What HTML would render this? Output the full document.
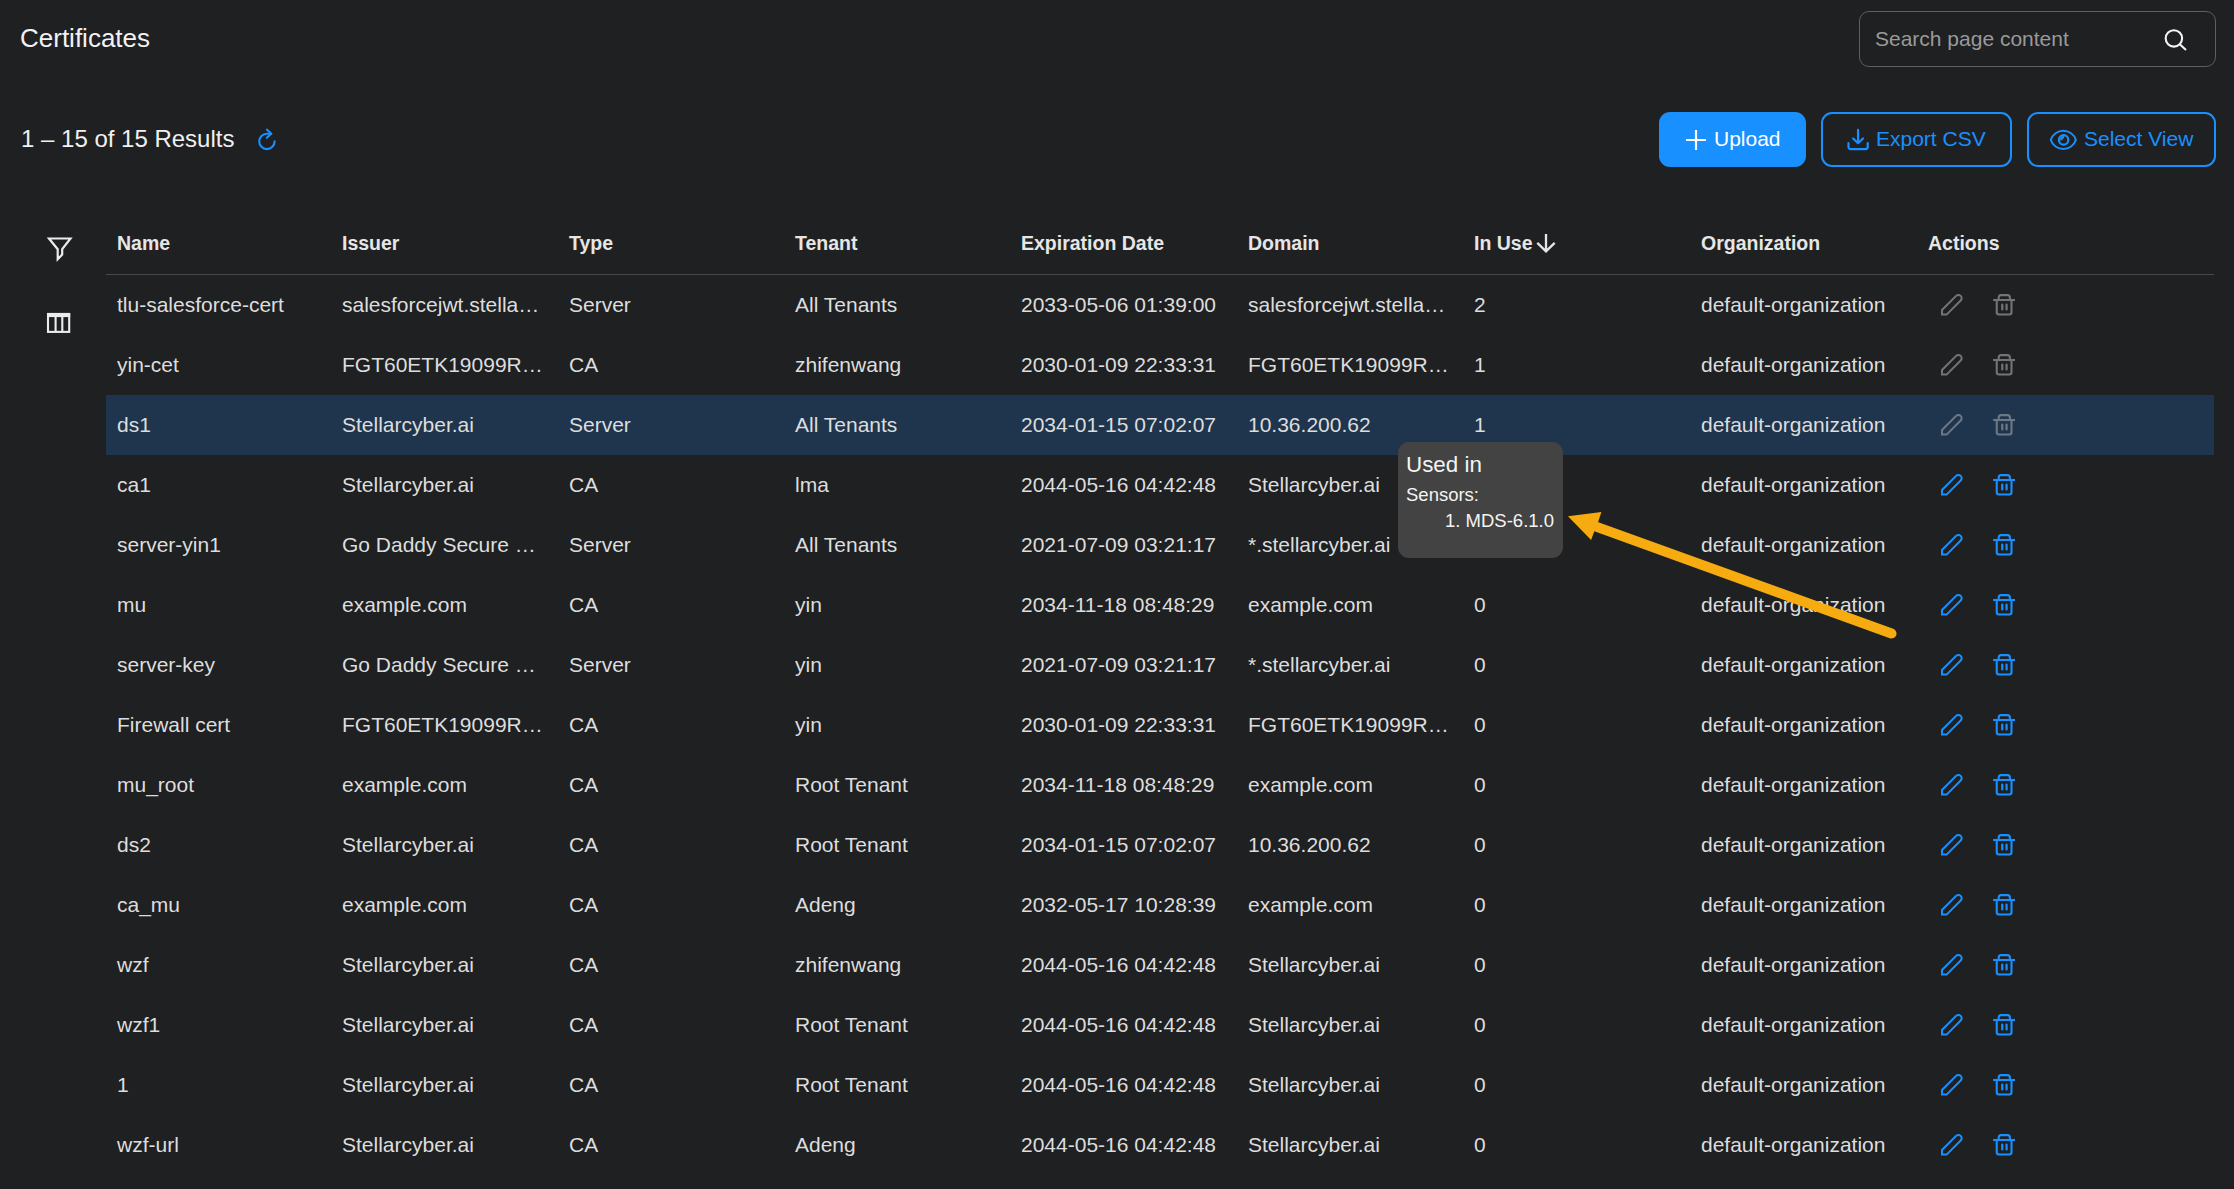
<!DOCTYPE html>
<html><head><meta charset="utf-8"><title>Certificates</title>
<style>
html,body{margin:0;padding:0;}
body{width:2234px;height:1189px;overflow:hidden;background:#1f2022;font-family:"Liberation Sans",sans-serif;position:relative;color:#dddddd;}
.a{position:absolute;white-space:nowrap;}
.title{left:20px;top:20px;font-size:26px;line-height:36px;color:#f2f2f2;}
.search{left:1859px;top:11px;width:355px;height:54px;border:1px solid #5f5f5f;border-radius:10px;}
.ph{left:1875px;top:24px;font-size:21px;line-height:30px;color:#9a9a9a;}
.results{left:21px;top:123px;font-size:24px;line-height:32px;color:#f0f0f0;}
.btn{top:112px;height:55px;border-radius:11px;box-sizing:border-box;}
.b1{left:1659px;width:147px;background:#1890ff;}
.b2{left:1821px;width:191px;border:2px solid #1890ff;}
.b3{left:2027px;width:189px;border:2px solid #1890ff;}
.bt{font-size:21px;line-height:30px;top:124px;}
.hd{font-size:19.5px;font-weight:bold;line-height:30px;top:228px;color:#e6e6e6;}
.cell{font-size:21px;line-height:60px;}
.row{left:106px;width:2108px;height:60px;}
</style></head><body>

<div class="a title">Certificates</div>
<div class="a search"></div>
<div class="a ph">Search page content</div>
<svg class="a" style="left:2163px;top:28px" width="26" height="26" viewBox="0 0 26 26" fill="none" stroke="#f4f4f4" stroke-width="2.1"><circle cx="10.9" cy="10.4" r="8.2"/><path d="M16.8 16.3 L23 22"/></svg>
<div class="a results">1 – 15 of 15 Results</div>
<svg class="a" style="left:250px;top:122px" width="34" height="34" viewBox="0 0 34 34" fill="none" stroke="#1890ff" stroke-width="2.1" stroke-linecap="round" stroke-linejoin="round"><path d="M24.6 19.4 A7.7 7.7 0 1 1 16.9 11.7 L21.2 11.7"/><path d="M16.9 7.6 L21.3 11.7 L16.9 15.8"/></svg>
<div class="a btn b1"></div><div class="a btn b2"></div><div class="a btn b3"></div>
<svg class="a" style="left:1685px;top:129px" width="22" height="22" viewBox="0 0 22 22" stroke="#fff" stroke-width="2.2"><path d="M11 1 V21 M1 11 H21"/></svg>
<div class="a bt" style="left:1714px;color:#fff">Upload</div>
<svg class="a" style="left:1846px;top:128px" width="24" height="24" viewBox="0 0 24 24" fill="none" stroke="#1890ff" stroke-width="2.2" stroke-linecap="round" stroke-linejoin="round"><path d="M12.07 1.9 V14.6 M7.1 10.5 L12.07 15.2 L17 10.5"/><path d="M2.5 15.1 V19 a2.2 2.2 0 0 0 2.2 2.2 H19.5 a2.2 2.2 0 0 0 2.2 -2.2 V15.1"/></svg>
<div class="a bt" style="left:1876px;color:#1890ff">Export CSV</div>
<svg class="a" style="left:2045px;top:124px" width="38" height="32" viewBox="0 0 38 32" fill="none" stroke="#1890ff" stroke-width="1.9" stroke-linejoin="round"><path d="M5.8 15.9 A13.2 13.2 0 0 1 30.9 15.9 A13.2 13.2 0 0 1 5.8 15.9 Z"/><circle cx="18.6" cy="15.9" r="4.7" stroke-width="2.2"/><path d="M15 16.2 A4 4 0 0 1 19.2 12 L19.2 14.3 A1.9 1.9 0 0 0 17.3 16.2 Z" fill="#1890ff" stroke="none"/></svg>
<div class="a bt" style="left:2084px;color:#1890ff">Select View</div>
<svg class="a" style="left:46px;top:236px" width="28" height="27" viewBox="0 0 28 27" fill="none" stroke="#ececec" stroke-width="2.2" stroke-linejoin="miter" stroke-miterlimit="10"><path d="M3 2.5 H24.5 L16.2 13.2 V18.6 L11.7 23.2 V13.2 Z"/></svg>
<svg class="a" style="left:46px;top:312px" width="26" height="23" viewBox="0 0 26 23" fill="none" stroke="#ececec"><rect x="2" y="2.5" width="21.2" height="17.4" stroke-width="2.1"/><path d="M1 3 H24.2" stroke-width="4.2"/><path d="M9.6 4 V19.5 M16.3 4 V19.5" stroke-width="2.1"/></svg>
<div class="a hd" style="left:117px">Name</div>
<div class="a hd" style="left:342px">Issuer</div>
<div class="a hd" style="left:569px">Type</div>
<div class="a hd" style="left:795px">Tenant</div>
<div class="a hd" style="left:1021px">Expiration Date</div>
<div class="a hd" style="left:1248px">Domain</div>
<div class="a hd" style="left:1474px">In Use</div>
<div class="a hd" style="left:1701px">Organization</div>
<div class="a hd" style="left:1928px">Actions</div>
<svg class="a" style="left:1534px;top:232px" width="23" height="23" viewBox="0 0 23 23" fill="none" stroke="#e6e6e6" stroke-width="2.3"><path d="M12 2 V19 M3.3 10.9 L12 19.4 L20.7 10.9"/></svg>
<div class="a" style="left:106px;top:274px;width:2108px;height:1px;background:#47484a"></div>
<div class="a cell" style="left:117px;top:275px">tlu-salesforce-cert</div>
<div class="a cell" style="left:342px;top:275px">salesforcejwt.stella…</div>
<div class="a cell" style="left:569px;top:275px">Server</div>
<div class="a cell" style="left:795px;top:275px">All Tenants</div>
<div class="a cell" style="left:1021px;top:275px">2033-05-06 01:39:00</div>
<div class="a cell" style="left:1248px;top:275px">salesforcejwt.stella…</div>
<div class="a cell" style="left:1474px;top:275px">2</div>
<div class="a cell" style="left:1701px;top:275px">default-organization</div>
<div class="a" style="left:1939px;top:292px"><svg width="25" height="25" viewBox="0 0 25 25" fill="none" stroke="#747474" stroke-width="2" stroke-linejoin="miter"><path d="M3 22.6 L3 18 L17.1 3.9 A3.25 3.25 0 0 1 21.7 8.5 L7.6 22.6 Z"/></svg></div>
<div class="a" style="left:1992px;top:292px"><svg width="25" height="25" viewBox="0 0 25 25" fill="none" stroke="#747474" stroke-width="2.1"><path d="M1.1 8 H23"/><path d="M4.75 8 V20.3 a2.2 2.2 0 0 0 2.2 2.2 H17.3 a2.2 2.2 0 0 0 2.2 -2.2 V8"/><path d="M6.7 7.5 V5.6 a2.5 2.5 0 0 1 2.5 -2.5 H15.4 a2.5 2.5 0 0 1 2.5 2.5 V7.5"/><path d="M10.26 12.7 V17.5 M14.57 12.7 V17.5" stroke-width="2.2" stroke-linecap="round"/></svg></div>
<div class="a cell" style="left:117px;top:335px">yin-cet</div>
<div class="a cell" style="left:342px;top:335px">FGT60ETK19099R…</div>
<div class="a cell" style="left:569px;top:335px">CA</div>
<div class="a cell" style="left:795px;top:335px">zhifenwang</div>
<div class="a cell" style="left:1021px;top:335px">2030-01-09 22:33:31</div>
<div class="a cell" style="left:1248px;top:335px">FGT60ETK19099R…</div>
<div class="a cell" style="left:1474px;top:335px">1</div>
<div class="a cell" style="left:1701px;top:335px">default-organization</div>
<div class="a" style="left:1939px;top:352px"><svg width="25" height="25" viewBox="0 0 25 25" fill="none" stroke="#747474" stroke-width="2" stroke-linejoin="miter"><path d="M3 22.6 L3 18 L17.1 3.9 A3.25 3.25 0 0 1 21.7 8.5 L7.6 22.6 Z"/></svg></div>
<div class="a" style="left:1992px;top:352px"><svg width="25" height="25" viewBox="0 0 25 25" fill="none" stroke="#747474" stroke-width="2.1"><path d="M1.1 8 H23"/><path d="M4.75 8 V20.3 a2.2 2.2 0 0 0 2.2 2.2 H17.3 a2.2 2.2 0 0 0 2.2 -2.2 V8"/><path d="M6.7 7.5 V5.6 a2.5 2.5 0 0 1 2.5 -2.5 H15.4 a2.5 2.5 0 0 1 2.5 2.5 V7.5"/><path d="M10.26 12.7 V17.5 M14.57 12.7 V17.5" stroke-width="2.2" stroke-linecap="round"/></svg></div>
<div class="a row" style="top:395px;background:#1f354e"></div>
<div class="a cell" style="left:117px;top:395px">ds1</div>
<div class="a cell" style="left:342px;top:395px">Stellarcyber.ai</div>
<div class="a cell" style="left:569px;top:395px">Server</div>
<div class="a cell" style="left:795px;top:395px">All Tenants</div>
<div class="a cell" style="left:1021px;top:395px">2034-01-15 07:02:07</div>
<div class="a cell" style="left:1248px;top:395px">10.36.200.62</div>
<div class="a cell" style="left:1474px;top:395px">1</div>
<div class="a cell" style="left:1701px;top:395px">default-organization</div>
<div class="a" style="left:1939px;top:412px"><svg width="25" height="25" viewBox="0 0 25 25" fill="none" stroke="#6e7885" stroke-width="2" stroke-linejoin="miter"><path d="M3 22.6 L3 18 L17.1 3.9 A3.25 3.25 0 0 1 21.7 8.5 L7.6 22.6 Z"/></svg></div>
<div class="a" style="left:1992px;top:412px"><svg width="25" height="25" viewBox="0 0 25 25" fill="none" stroke="#6e7885" stroke-width="2.1"><path d="M1.1 8 H23"/><path d="M4.75 8 V20.3 a2.2 2.2 0 0 0 2.2 2.2 H17.3 a2.2 2.2 0 0 0 2.2 -2.2 V8"/><path d="M6.7 7.5 V5.6 a2.5 2.5 0 0 1 2.5 -2.5 H15.4 a2.5 2.5 0 0 1 2.5 2.5 V7.5"/><path d="M10.26 12.7 V17.5 M14.57 12.7 V17.5" stroke-width="2.2" stroke-linecap="round"/></svg></div>
<div class="a cell" style="left:117px;top:455px">ca1</div>
<div class="a cell" style="left:342px;top:455px">Stellarcyber.ai</div>
<div class="a cell" style="left:569px;top:455px">CA</div>
<div class="a cell" style="left:795px;top:455px">lma</div>
<div class="a cell" style="left:1021px;top:455px">2044-05-16 04:42:48</div>
<div class="a cell" style="left:1248px;top:455px">Stellarcyber.ai</div>
<div class="a cell" style="left:1474px;top:455px">0</div>
<div class="a cell" style="left:1701px;top:455px">default-organization</div>
<div class="a" style="left:1939px;top:472px"><svg width="25" height="25" viewBox="0 0 25 25" fill="none" stroke="#1890ff" stroke-width="2" stroke-linejoin="miter"><path d="M3 22.6 L3 18 L17.1 3.9 A3.25 3.25 0 0 1 21.7 8.5 L7.6 22.6 Z"/></svg></div>
<div class="a" style="left:1992px;top:472px"><svg width="25" height="25" viewBox="0 0 25 25" fill="none" stroke="#1890ff" stroke-width="2.1"><path d="M1.1 8 H23"/><path d="M4.75 8 V20.3 a2.2 2.2 0 0 0 2.2 2.2 H17.3 a2.2 2.2 0 0 0 2.2 -2.2 V8"/><path d="M6.7 7.5 V5.6 a2.5 2.5 0 0 1 2.5 -2.5 H15.4 a2.5 2.5 0 0 1 2.5 2.5 V7.5"/><path d="M10.26 12.7 V17.5 M14.57 12.7 V17.5" stroke-width="2.2" stroke-linecap="round"/></svg></div>
<div class="a cell" style="left:117px;top:515px">server-yin1</div>
<div class="a cell" style="left:342px;top:515px">Go Daddy Secure …</div>
<div class="a cell" style="left:569px;top:515px">Server</div>
<div class="a cell" style="left:795px;top:515px">All Tenants</div>
<div class="a cell" style="left:1021px;top:515px">2021-07-09 03:21:17</div>
<div class="a cell" style="left:1248px;top:515px">*.stellarcyber.ai</div>
<div class="a cell" style="left:1474px;top:515px">0</div>
<div class="a cell" style="left:1701px;top:515px">default-organization</div>
<div class="a" style="left:1939px;top:532px"><svg width="25" height="25" viewBox="0 0 25 25" fill="none" stroke="#1890ff" stroke-width="2" stroke-linejoin="miter"><path d="M3 22.6 L3 18 L17.1 3.9 A3.25 3.25 0 0 1 21.7 8.5 L7.6 22.6 Z"/></svg></div>
<div class="a" style="left:1992px;top:532px"><svg width="25" height="25" viewBox="0 0 25 25" fill="none" stroke="#1890ff" stroke-width="2.1"><path d="M1.1 8 H23"/><path d="M4.75 8 V20.3 a2.2 2.2 0 0 0 2.2 2.2 H17.3 a2.2 2.2 0 0 0 2.2 -2.2 V8"/><path d="M6.7 7.5 V5.6 a2.5 2.5 0 0 1 2.5 -2.5 H15.4 a2.5 2.5 0 0 1 2.5 2.5 V7.5"/><path d="M10.26 12.7 V17.5 M14.57 12.7 V17.5" stroke-width="2.2" stroke-linecap="round"/></svg></div>
<div class="a cell" style="left:117px;top:575px">mu</div>
<div class="a cell" style="left:342px;top:575px">example.com</div>
<div class="a cell" style="left:569px;top:575px">CA</div>
<div class="a cell" style="left:795px;top:575px">yin</div>
<div class="a cell" style="left:1021px;top:575px">2034-11-18 08:48:29</div>
<div class="a cell" style="left:1248px;top:575px">example.com</div>
<div class="a cell" style="left:1474px;top:575px">0</div>
<div class="a cell" style="left:1701px;top:575px">default-organization</div>
<div class="a" style="left:1939px;top:592px"><svg width="25" height="25" viewBox="0 0 25 25" fill="none" stroke="#1890ff" stroke-width="2" stroke-linejoin="miter"><path d="M3 22.6 L3 18 L17.1 3.9 A3.25 3.25 0 0 1 21.7 8.5 L7.6 22.6 Z"/></svg></div>
<div class="a" style="left:1992px;top:592px"><svg width="25" height="25" viewBox="0 0 25 25" fill="none" stroke="#1890ff" stroke-width="2.1"><path d="M1.1 8 H23"/><path d="M4.75 8 V20.3 a2.2 2.2 0 0 0 2.2 2.2 H17.3 a2.2 2.2 0 0 0 2.2 -2.2 V8"/><path d="M6.7 7.5 V5.6 a2.5 2.5 0 0 1 2.5 -2.5 H15.4 a2.5 2.5 0 0 1 2.5 2.5 V7.5"/><path d="M10.26 12.7 V17.5 M14.57 12.7 V17.5" stroke-width="2.2" stroke-linecap="round"/></svg></div>
<div class="a cell" style="left:117px;top:635px">server-key</div>
<div class="a cell" style="left:342px;top:635px">Go Daddy Secure …</div>
<div class="a cell" style="left:569px;top:635px">Server</div>
<div class="a cell" style="left:795px;top:635px">yin</div>
<div class="a cell" style="left:1021px;top:635px">2021-07-09 03:21:17</div>
<div class="a cell" style="left:1248px;top:635px">*.stellarcyber.ai</div>
<div class="a cell" style="left:1474px;top:635px">0</div>
<div class="a cell" style="left:1701px;top:635px">default-organization</div>
<div class="a" style="left:1939px;top:652px"><svg width="25" height="25" viewBox="0 0 25 25" fill="none" stroke="#1890ff" stroke-width="2" stroke-linejoin="miter"><path d="M3 22.6 L3 18 L17.1 3.9 A3.25 3.25 0 0 1 21.7 8.5 L7.6 22.6 Z"/></svg></div>
<div class="a" style="left:1992px;top:652px"><svg width="25" height="25" viewBox="0 0 25 25" fill="none" stroke="#1890ff" stroke-width="2.1"><path d="M1.1 8 H23"/><path d="M4.75 8 V20.3 a2.2 2.2 0 0 0 2.2 2.2 H17.3 a2.2 2.2 0 0 0 2.2 -2.2 V8"/><path d="M6.7 7.5 V5.6 a2.5 2.5 0 0 1 2.5 -2.5 H15.4 a2.5 2.5 0 0 1 2.5 2.5 V7.5"/><path d="M10.26 12.7 V17.5 M14.57 12.7 V17.5" stroke-width="2.2" stroke-linecap="round"/></svg></div>
<div class="a cell" style="left:117px;top:695px">Firewall cert</div>
<div class="a cell" style="left:342px;top:695px">FGT60ETK19099R…</div>
<div class="a cell" style="left:569px;top:695px">CA</div>
<div class="a cell" style="left:795px;top:695px">yin</div>
<div class="a cell" style="left:1021px;top:695px">2030-01-09 22:33:31</div>
<div class="a cell" style="left:1248px;top:695px">FGT60ETK19099R…</div>
<div class="a cell" style="left:1474px;top:695px">0</div>
<div class="a cell" style="left:1701px;top:695px">default-organization</div>
<div class="a" style="left:1939px;top:712px"><svg width="25" height="25" viewBox="0 0 25 25" fill="none" stroke="#1890ff" stroke-width="2" stroke-linejoin="miter"><path d="M3 22.6 L3 18 L17.1 3.9 A3.25 3.25 0 0 1 21.7 8.5 L7.6 22.6 Z"/></svg></div>
<div class="a" style="left:1992px;top:712px"><svg width="25" height="25" viewBox="0 0 25 25" fill="none" stroke="#1890ff" stroke-width="2.1"><path d="M1.1 8 H23"/><path d="M4.75 8 V20.3 a2.2 2.2 0 0 0 2.2 2.2 H17.3 a2.2 2.2 0 0 0 2.2 -2.2 V8"/><path d="M6.7 7.5 V5.6 a2.5 2.5 0 0 1 2.5 -2.5 H15.4 a2.5 2.5 0 0 1 2.5 2.5 V7.5"/><path d="M10.26 12.7 V17.5 M14.57 12.7 V17.5" stroke-width="2.2" stroke-linecap="round"/></svg></div>
<div class="a cell" style="left:117px;top:755px">mu_root</div>
<div class="a cell" style="left:342px;top:755px">example.com</div>
<div class="a cell" style="left:569px;top:755px">CA</div>
<div class="a cell" style="left:795px;top:755px">Root Tenant</div>
<div class="a cell" style="left:1021px;top:755px">2034-11-18 08:48:29</div>
<div class="a cell" style="left:1248px;top:755px">example.com</div>
<div class="a cell" style="left:1474px;top:755px">0</div>
<div class="a cell" style="left:1701px;top:755px">default-organization</div>
<div class="a" style="left:1939px;top:772px"><svg width="25" height="25" viewBox="0 0 25 25" fill="none" stroke="#1890ff" stroke-width="2" stroke-linejoin="miter"><path d="M3 22.6 L3 18 L17.1 3.9 A3.25 3.25 0 0 1 21.7 8.5 L7.6 22.6 Z"/></svg></div>
<div class="a" style="left:1992px;top:772px"><svg width="25" height="25" viewBox="0 0 25 25" fill="none" stroke="#1890ff" stroke-width="2.1"><path d="M1.1 8 H23"/><path d="M4.75 8 V20.3 a2.2 2.2 0 0 0 2.2 2.2 H17.3 a2.2 2.2 0 0 0 2.2 -2.2 V8"/><path d="M6.7 7.5 V5.6 a2.5 2.5 0 0 1 2.5 -2.5 H15.4 a2.5 2.5 0 0 1 2.5 2.5 V7.5"/><path d="M10.26 12.7 V17.5 M14.57 12.7 V17.5" stroke-width="2.2" stroke-linecap="round"/></svg></div>
<div class="a cell" style="left:117px;top:815px">ds2</div>
<div class="a cell" style="left:342px;top:815px">Stellarcyber.ai</div>
<div class="a cell" style="left:569px;top:815px">CA</div>
<div class="a cell" style="left:795px;top:815px">Root Tenant</div>
<div class="a cell" style="left:1021px;top:815px">2034-01-15 07:02:07</div>
<div class="a cell" style="left:1248px;top:815px">10.36.200.62</div>
<div class="a cell" style="left:1474px;top:815px">0</div>
<div class="a cell" style="left:1701px;top:815px">default-organization</div>
<div class="a" style="left:1939px;top:832px"><svg width="25" height="25" viewBox="0 0 25 25" fill="none" stroke="#1890ff" stroke-width="2" stroke-linejoin="miter"><path d="M3 22.6 L3 18 L17.1 3.9 A3.25 3.25 0 0 1 21.7 8.5 L7.6 22.6 Z"/></svg></div>
<div class="a" style="left:1992px;top:832px"><svg width="25" height="25" viewBox="0 0 25 25" fill="none" stroke="#1890ff" stroke-width="2.1"><path d="M1.1 8 H23"/><path d="M4.75 8 V20.3 a2.2 2.2 0 0 0 2.2 2.2 H17.3 a2.2 2.2 0 0 0 2.2 -2.2 V8"/><path d="M6.7 7.5 V5.6 a2.5 2.5 0 0 1 2.5 -2.5 H15.4 a2.5 2.5 0 0 1 2.5 2.5 V7.5"/><path d="M10.26 12.7 V17.5 M14.57 12.7 V17.5" stroke-width="2.2" stroke-linecap="round"/></svg></div>
<div class="a cell" style="left:117px;top:875px">ca_mu</div>
<div class="a cell" style="left:342px;top:875px">example.com</div>
<div class="a cell" style="left:569px;top:875px">CA</div>
<div class="a cell" style="left:795px;top:875px">Adeng</div>
<div class="a cell" style="left:1021px;top:875px">2032-05-17 10:28:39</div>
<div class="a cell" style="left:1248px;top:875px">example.com</div>
<div class="a cell" style="left:1474px;top:875px">0</div>
<div class="a cell" style="left:1701px;top:875px">default-organization</div>
<div class="a" style="left:1939px;top:892px"><svg width="25" height="25" viewBox="0 0 25 25" fill="none" stroke="#1890ff" stroke-width="2" stroke-linejoin="miter"><path d="M3 22.6 L3 18 L17.1 3.9 A3.25 3.25 0 0 1 21.7 8.5 L7.6 22.6 Z"/></svg></div>
<div class="a" style="left:1992px;top:892px"><svg width="25" height="25" viewBox="0 0 25 25" fill="none" stroke="#1890ff" stroke-width="2.1"><path d="M1.1 8 H23"/><path d="M4.75 8 V20.3 a2.2 2.2 0 0 0 2.2 2.2 H17.3 a2.2 2.2 0 0 0 2.2 -2.2 V8"/><path d="M6.7 7.5 V5.6 a2.5 2.5 0 0 1 2.5 -2.5 H15.4 a2.5 2.5 0 0 1 2.5 2.5 V7.5"/><path d="M10.26 12.7 V17.5 M14.57 12.7 V17.5" stroke-width="2.2" stroke-linecap="round"/></svg></div>
<div class="a cell" style="left:117px;top:935px">wzf</div>
<div class="a cell" style="left:342px;top:935px">Stellarcyber.ai</div>
<div class="a cell" style="left:569px;top:935px">CA</div>
<div class="a cell" style="left:795px;top:935px">zhifenwang</div>
<div class="a cell" style="left:1021px;top:935px">2044-05-16 04:42:48</div>
<div class="a cell" style="left:1248px;top:935px">Stellarcyber.ai</div>
<div class="a cell" style="left:1474px;top:935px">0</div>
<div class="a cell" style="left:1701px;top:935px">default-organization</div>
<div class="a" style="left:1939px;top:952px"><svg width="25" height="25" viewBox="0 0 25 25" fill="none" stroke="#1890ff" stroke-width="2" stroke-linejoin="miter"><path d="M3 22.6 L3 18 L17.1 3.9 A3.25 3.25 0 0 1 21.7 8.5 L7.6 22.6 Z"/></svg></div>
<div class="a" style="left:1992px;top:952px"><svg width="25" height="25" viewBox="0 0 25 25" fill="none" stroke="#1890ff" stroke-width="2.1"><path d="M1.1 8 H23"/><path d="M4.75 8 V20.3 a2.2 2.2 0 0 0 2.2 2.2 H17.3 a2.2 2.2 0 0 0 2.2 -2.2 V8"/><path d="M6.7 7.5 V5.6 a2.5 2.5 0 0 1 2.5 -2.5 H15.4 a2.5 2.5 0 0 1 2.5 2.5 V7.5"/><path d="M10.26 12.7 V17.5 M14.57 12.7 V17.5" stroke-width="2.2" stroke-linecap="round"/></svg></div>
<div class="a cell" style="left:117px;top:995px">wzf1</div>
<div class="a cell" style="left:342px;top:995px">Stellarcyber.ai</div>
<div class="a cell" style="left:569px;top:995px">CA</div>
<div class="a cell" style="left:795px;top:995px">Root Tenant</div>
<div class="a cell" style="left:1021px;top:995px">2044-05-16 04:42:48</div>
<div class="a cell" style="left:1248px;top:995px">Stellarcyber.ai</div>
<div class="a cell" style="left:1474px;top:995px">0</div>
<div class="a cell" style="left:1701px;top:995px">default-organization</div>
<div class="a" style="left:1939px;top:1012px"><svg width="25" height="25" viewBox="0 0 25 25" fill="none" stroke="#1890ff" stroke-width="2" stroke-linejoin="miter"><path d="M3 22.6 L3 18 L17.1 3.9 A3.25 3.25 0 0 1 21.7 8.5 L7.6 22.6 Z"/></svg></div>
<div class="a" style="left:1992px;top:1012px"><svg width="25" height="25" viewBox="0 0 25 25" fill="none" stroke="#1890ff" stroke-width="2.1"><path d="M1.1 8 H23"/><path d="M4.75 8 V20.3 a2.2 2.2 0 0 0 2.2 2.2 H17.3 a2.2 2.2 0 0 0 2.2 -2.2 V8"/><path d="M6.7 7.5 V5.6 a2.5 2.5 0 0 1 2.5 -2.5 H15.4 a2.5 2.5 0 0 1 2.5 2.5 V7.5"/><path d="M10.26 12.7 V17.5 M14.57 12.7 V17.5" stroke-width="2.2" stroke-linecap="round"/></svg></div>
<div class="a cell" style="left:117px;top:1055px">1</div>
<div class="a cell" style="left:342px;top:1055px">Stellarcyber.ai</div>
<div class="a cell" style="left:569px;top:1055px">CA</div>
<div class="a cell" style="left:795px;top:1055px">Root Tenant</div>
<div class="a cell" style="left:1021px;top:1055px">2044-05-16 04:42:48</div>
<div class="a cell" style="left:1248px;top:1055px">Stellarcyber.ai</div>
<div class="a cell" style="left:1474px;top:1055px">0</div>
<div class="a cell" style="left:1701px;top:1055px">default-organization</div>
<div class="a" style="left:1939px;top:1072px"><svg width="25" height="25" viewBox="0 0 25 25" fill="none" stroke="#1890ff" stroke-width="2" stroke-linejoin="miter"><path d="M3 22.6 L3 18 L17.1 3.9 A3.25 3.25 0 0 1 21.7 8.5 L7.6 22.6 Z"/></svg></div>
<div class="a" style="left:1992px;top:1072px"><svg width="25" height="25" viewBox="0 0 25 25" fill="none" stroke="#1890ff" stroke-width="2.1"><path d="M1.1 8 H23"/><path d="M4.75 8 V20.3 a2.2 2.2 0 0 0 2.2 2.2 H17.3 a2.2 2.2 0 0 0 2.2 -2.2 V8"/><path d="M6.7 7.5 V5.6 a2.5 2.5 0 0 1 2.5 -2.5 H15.4 a2.5 2.5 0 0 1 2.5 2.5 V7.5"/><path d="M10.26 12.7 V17.5 M14.57 12.7 V17.5" stroke-width="2.2" stroke-linecap="round"/></svg></div>
<div class="a cell" style="left:117px;top:1115px">wzf-url</div>
<div class="a cell" style="left:342px;top:1115px">Stellarcyber.ai</div>
<div class="a cell" style="left:569px;top:1115px">CA</div>
<div class="a cell" style="left:795px;top:1115px">Adeng</div>
<div class="a cell" style="left:1021px;top:1115px">2044-05-16 04:42:48</div>
<div class="a cell" style="left:1248px;top:1115px">Stellarcyber.ai</div>
<div class="a cell" style="left:1474px;top:1115px">0</div>
<div class="a cell" style="left:1701px;top:1115px">default-organization</div>
<div class="a" style="left:1939px;top:1132px"><svg width="25" height="25" viewBox="0 0 25 25" fill="none" stroke="#1890ff" stroke-width="2" stroke-linejoin="miter"><path d="M3 22.6 L3 18 L17.1 3.9 A3.25 3.25 0 0 1 21.7 8.5 L7.6 22.6 Z"/></svg></div>
<div class="a" style="left:1992px;top:1132px"><svg width="25" height="25" viewBox="0 0 25 25" fill="none" stroke="#1890ff" stroke-width="2.1"><path d="M1.1 8 H23"/><path d="M4.75 8 V20.3 a2.2 2.2 0 0 0 2.2 2.2 H17.3 a2.2 2.2 0 0 0 2.2 -2.2 V8"/><path d="M6.7 7.5 V5.6 a2.5 2.5 0 0 1 2.5 -2.5 H15.4 a2.5 2.5 0 0 1 2.5 2.5 V7.5"/><path d="M10.26 12.7 V17.5 M14.57 12.7 V17.5" stroke-width="2.2" stroke-linecap="round"/></svg></div>
<div class="a" style="left:1398px;top:442px;width:165px;height:116px;border-radius:11px;background:#434343"></div>
<div class="a" style="left:1406px;top:450px;font-size:22.4px;line-height:30px;color:#f4f4f4">Used in</div>
<div class="a" style="left:1406px;top:482px;font-size:18.5px;line-height:26px;color:#f4f4f4">Sensors:</div>
<div class="a" style="left:1445px;top:508px;font-size:18.5px;line-height:26px;color:#f4f4f4">1. MDS-6.1.0</div>
<svg class="a" style="left:0;top:0" width="2234" height="1189" viewBox="0 0 2234 1189"><path d="M1596 526.6 L1891.5 633.5" stroke="#f6ac10" stroke-width="10" stroke-linecap="round"/><path d="M1568 516.2 L1601.4 512 L1598.1 521.9 L1594.3 531.3 L1591.1 540 Z" fill="#f6ac10"/></svg>
</body></html>
